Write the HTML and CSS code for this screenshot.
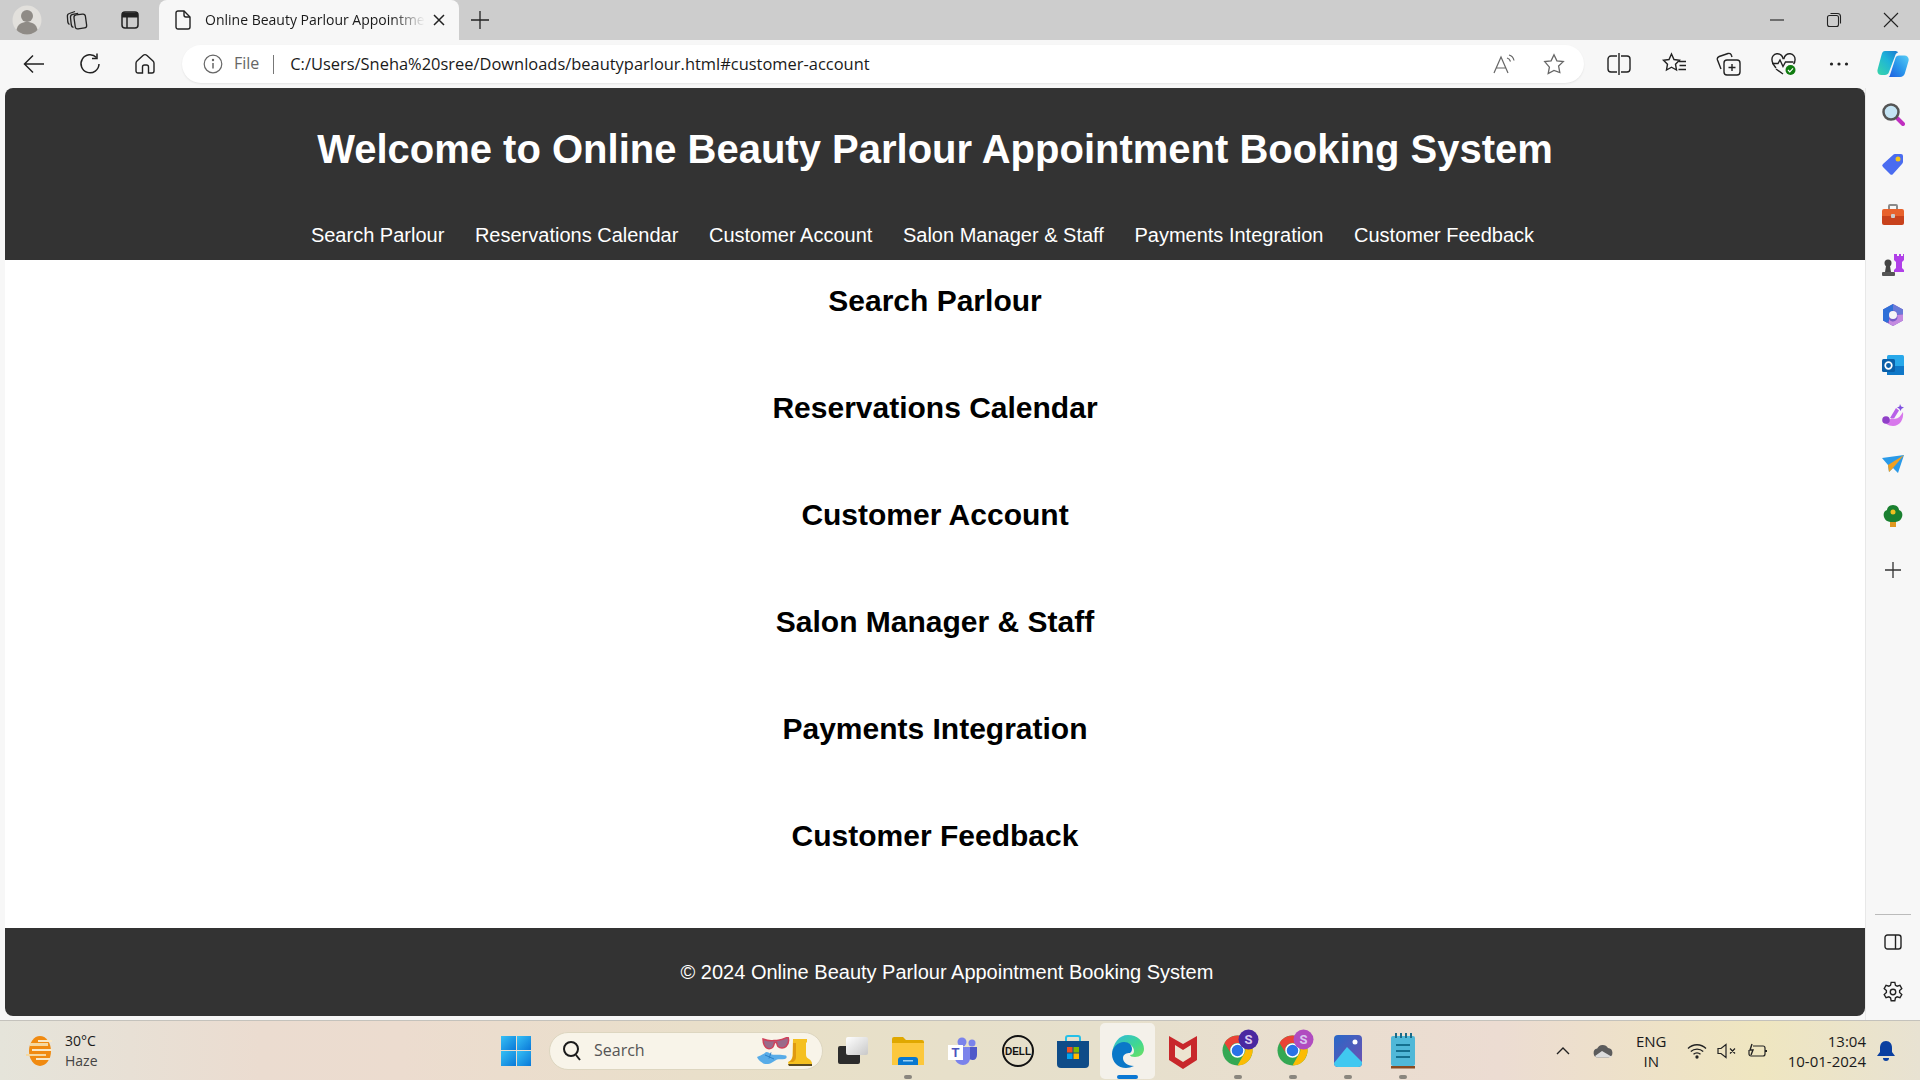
FILE: index.html
```html
<!DOCTYPE html>
<html lang="en">

<head>
    <meta charset="UTF-8">
    <title>Online Beauty Parlour Appointment Booking System</title>
    <link rel="stylesheet" href="styles.css">
</head>

<body>
    <!-- browser tab strip -->
    <div class="tabstrip">
        <div class="strip-btn profile">
            <svg width="30" height="30" viewBox="0 0 30 30"><circle cx="15" cy="15" r="14.500" fill="#e2e0dc"/><circle cx="15" cy="11" r="6" fill="#8f8b86"/><path d="M4.500 25c1-6 5.500-8 10.500-8s9.500 2 10.500 8a14.500 14.500 0 0 1-21 0z" fill="#8f8b86"/></svg>
        </div>
        <div class="strip-btn collections">
            <svg width="22" height="22" viewBox="0 0 22 22" fill="none" stroke="#222" stroke-width="1.300"><rect x="8.500" y="5.500" width="11.500" height="14" rx="2.500" transform="rotate(-8 14 12)"/><path d="M7.500 18.500C6 18 5.500 17 5.300 16L4.500 8.500c-.2-1.700.6-2.800 2.200-3.200l5.500-1"/><path d="M3.500 15.500C2.500 15 2 14 1.800 13L1.400 7.500c-.2-1.500.6-2.600 2-3L9 2.500"/></svg>
        </div>
        <div class="strip-btn vtabs">
            <svg width="20" height="20" viewBox="0 0 20 20" fill="none" stroke="#222" stroke-width="1.500"><rect x="2" y="2" width="16" height="16" rx="3"/><path d="M2 5h16" stroke-width="5"/><path d="M7 6v12"/></svg>
        </div>
        <div class="tab">
            <svg width="16" height="20" viewBox="0 0 16 20" fill="none" stroke="#222" stroke-width="1.400"><path d="M3 1h6l6 6v10a2 2 0 0 1-2 2H3a2 2 0 0 1-2-2V3a2 2 0 0 1 2-2z"/><path d="M9 1v4a2 2 0 0 0 2 2h4"/></svg>
            <span class="tab-title">Online Beauty Parlour Appointme</span>
            <svg class="tab-close" width="12" height="12" viewBox="0 0 12 12" stroke="#222" stroke-width="1.500"><path d="M1 1l10 10M11 1 1 11"/></svg>
        </div>
        <div class="new-tab">
            <svg width="18" height="18" viewBox="0 0 18 18" stroke="#222" stroke-width="1.300"><path d="M9 0v18M0 9h18"/></svg>
        </div>
        <div class="win-controls">
            <svg width="16" height="16" viewBox="0 0 16 16" stroke="#222" stroke-width="1.100"><path d="M1 8h14"/></svg>
            <svg width="16" height="16" viewBox="0 0 16 16" fill="none" stroke="#222" stroke-width="1.100"><rect x="1.500" y="3.500" width="11" height="11" rx="2"/><path d="M4.500 1.500h7a3 3 0 0 1 3 3v7"/></svg>
            <svg width="16" height="16" viewBox="0 0 16 16" stroke="#222" stroke-width="1.100"><path d="M1 1l14 14M15 1 1 15"/></svg>
        </div>
    </div>

    <!-- address bar row -->
    <div class="toolbar">
        <div class="tool-btn back">
            <svg width="22" height="20" viewBox="0 0 22 20" fill="none" stroke="#222" stroke-width="1.500"><path d="M21 10H2M10 1.500 1.500 10l8.500 8.500"/></svg>
        </div>
        <div class="tool-btn">
            <svg width="22" height="22" viewBox="0 0 22 22" fill="none" stroke="#222" stroke-width="1.500"><path d="M17.500 4.500A9 9 0 1 0 20 11"/><path d="M18 .5v5h-5"/></svg>
        </div>
        <div class="tool-btn home">
            <svg width="20" height="22" viewBox="0 0 20 22" fill="none" stroke="#222" stroke-width="1.400"><path d="M8 2.500a3 3 0 0 1 4 0l6 5.500a3 3 0 0 1 1 2.200V18a2 2 0 0 1-2 2h-3.500v-6a2 2 0 0 0-2-2H9.500a2 2 0 0 0-2 2v6H3a2 2 0 0 1-2-2v-7.800A3 3 0 0 1 2 8z"/></svg>
        </div>
        <div class="address">
            <svg class="addr-info" width="20" height="20" viewBox="0 0 20 20" fill="none" stroke="#666" stroke-width="1.200"><circle cx="10" cy="10" r="8.800"/><path d="M10 9v5.500" stroke-width="1.500"/><circle cx="10" cy="6" r=".6" fill="#666"/></svg>
            <span class="addr-file">File</span>
            <span class="addr-sep"></span>
            <span class="addr-url">C:/Users/Sneha%20sree/Downloads/beautyparlour.html#customer-account</span>
            <svg class="addr-read" width="22" height="20" viewBox="0 0 22 20" fill="none" stroke="#666" stroke-width="1.200"><path d="M1 19 8 3l7 16M3.500 14h9"/><path d="M14 4c1.800.5 3 2 3.500 3.500M16 1c2.500.7 4.500 3 5 5.500"/></svg>
            <svg class="addr-star" width="22" height="22" viewBox="0 0 22 22" fill="none" stroke="#666" stroke-width="1.300"><path d="M11 1.800l2.900 6 6.400.8-4.700 4.500 1.200 6.500L11 17.400l-5.800 3.200 1.200-6.500L1.700 8.600l6.400-.8z"/></svg>
        </div>
        <div class="tool-btn edge-btn">
            <svg width="24" height="22" viewBox="0 0 24 22" fill="none" stroke="#222" stroke-width="1.400"><path d="M10 3H4a3 3 0 0 0-3 3v10a3 3 0 0 0 3 3h6M14 3h6a3 3 0 0 1 3 3v10a3 3 0 0 1-3 3h-6"/><path d="M12 0v22"/></svg>
        </div>
        <div class="tool-btn edge-btn">
            <svg width="26" height="24" viewBox="0 0 26 24" fill="none" stroke="#222" stroke-width="1.400"><path d="M10.500 2l2.500 5.500 5.500.7-4 4 1 5.800-5-2.800-5 2.800 1-5.800-4-4 5.500-.7z"/><path d="M18 9.500h7M18.500 13.500H25M17.500 17.500H25"/></svg>
        </div>
        <div class="tool-btn edge-btn">
            <svg width="26" height="24" viewBox="0 0 26 24" fill="none" stroke="#222" stroke-width="1.400"><rect x="8" y="8" width="16" height="15" rx="3"/><path d="M16 12v7M12.500 15.500h7"/><path d="M5 17 1.500 8c-.5-1.500.3-3 1.700-3.500L12 1.500c1.500-.5 3 .3 3.500 2L16 5"/></svg>
        </div>
        <div class="tool-btn edge-btn">
            <svg width="26" height="24" viewBox="0 0 26 24" fill="none"><path d="M5 16C2.500 13 1 11 1 8a5.500 5.500 0 0 1 11-1.500h1A5.500 5.500 0 0 1 24 8c0 1.500-.5 3-1.500 4M5 17l7 5" stroke="#222" stroke-width="1.400"/><path d="M1 11.500h6l2-3.500 3 6.500 2.500-4.500h8" stroke="#222" stroke-width="1.400"/><circle cx="19.500" cy="18" r="5" fill="#107c10"/><path d="M17 18l1.800 1.800 3.200-3.400" stroke="#fff" stroke-width="1.200"/></svg>
        </div>
        <div class="tool-btn edge-btn">
            <svg width="20" height="4" viewBox="0 0 20 4" fill="#222"><circle cx="2.500" cy="2" r="1.600"/><circle cx="10" cy="2" r="1.600"/><circle cx="17.500" cy="2" r="1.600"/></svg>
        </div>
        <div class="tool-btn copilot">
            <svg width="32" height="28" viewBox="0 0 32 28">
                <defs>
                    <linearGradient id="cpa" x1="0" y1="1" x2="1" y2="0"><stop offset="0" stop-color="#3ad6a8"/><stop offset=".55" stop-color="#1eb4d8"/><stop offset="1" stop-color="#1a78d0"/></linearGradient>
                    <linearGradient id="cpb" x1="0" y1="1" x2="1" y2="0"><stop offset="0" stop-color="#1f5ee0"/><stop offset=".5" stop-color="#2a98ec"/><stop offset="1" stop-color="#58cdf5"/></linearGradient>
                </defs>
                <path d="M14 27h9c2.500 0 4-1.200 4.800-3.500L31.500 11c.8-3-1-5.500-4-5.500H22c-2 0-3 1-3.600 2.800L13 25c-.3 1-.6 1.700-1.500 2z" fill="url(#cpb)"/>
                <path d="M8 1h10c1.500 0 2.500.5 3.200 1.500-1.500.2-2.400 1.200-3 3L12 22c-.7 2.200-2.300 3-4 3H4.500C1.500 25-.2 22.500.6 19.500L4.500 5C5.200 2.500 6 1 8 1z" fill="url(#cpa)"/>
            </svg>
        </div>
    </div>

    <div class="middle">
        <div class="page">
            <header class="site-header">
                <h1>Welcome to Online Beauty Parlour Appointment Booking System</h1>
                <nav class="site-nav">
                    <a href="#search-parlour">Search Parlour</a>
                    <a href="#reservations-calendar">Reservations Calendar</a>
                    <a href="#customer-account">Customer Account</a>
                    <a href="#salon-manager">Salon Manager &amp; Staff</a>
                    <a href="#payments-integration">Payments Integration</a>
                    <a href="#customer-feedback">Customer Feedback</a>
                </nav>
            </header>

            <main class="sections">
                <section id="search-parlour"><h2>Search Parlour</h2></section>
                <section id="reservations-calendar"><h2>Reservations Calendar</h2></section>
                <section id="customer-account"><h2>Customer Account</h2></section>
                <section id="salon-manager"><h2>Salon Manager &amp; Staff</h2></section>
                <section id="payments-integration"><h2>Payments Integration</h2></section>
                <section id="customer-feedback"><h2>Customer Feedback</h2></section>
            </main>

            <footer class="site-footer">&copy; 2024 Online Beauty Parlour Appointment Booking System</footer>
        </div>

        <!-- edge sidebar -->
        <aside class="sidebar">
            <svg width="24" height="24" viewBox="0 0 24 24"><path d="M15 15l7 7" stroke="#c02fc0" stroke-width="4" stroke-linecap="round"/><circle cx="10" cy="10" r="7.500" fill="#c4e4f4" stroke="#555" stroke-width="2.500"/></svg>
            <svg width="24" height="24" viewBox="0 0 24 24"><path d="M14 2h6a2 2 0 0 1 2 2v6a3 3 0 0 1-1 2l-9 10a2 2 0 0 1-3 0l-7-7a2 2 0 0 1 0-3L12 3a3 3 0 0 1 2-1z" fill="#4a6cf0"/><circle cx="17" cy="7" r="2.500" fill="#f5c518"/></svg>
            <svg width="24" height="24" viewBox="0 0 24 24"><path d="M8 8V4a1 1 0 0 1 1-1h6a1 1 0 0 1 1 1v4" fill="none" stroke="#8a8a8a" stroke-width="2"/><path d="M1 9a2 2 0 0 1 2-2h18a2 2 0 0 1 2 2v5H1z" fill="#e8622c"/><path d="M1 14h22v7a2 2 0 0 1-2 2H3a2 2 0 0 1-2-2z" fill="#c8421c"/><rect x="10" y="12" width="4" height="4" rx="1" fill="#ccc"/></svg>
            <svg width="24" height="24" viewBox="0 0 24 24"><path d="M14 1h2v2h2V1h2v2h2V1h1v6l-2 2v6l2 2v2H13v-2l2-2V9l-2-2V1z" fill="#b03fe8"/><circle cx="7" cy="10" r="3.500" fill="#444"/><path d="M5 13h4l1 6H4z" fill="#444"/><rect x="1" y="19" width="13" height="4" rx="1" fill="#555"/></svg>
            <svg width="24" height="24" viewBox="0 0 24 24">
                <path d="M12 1l10 5.500v11L12 23 2 17.500v-11z" fill="#7a5cc8"/>
                <path d="M2 6.500 12 1v7a4 4 0 0 0-4 4v5.500l-2 2.200-4-2.200z" fill="#2f70d8"/>
                <path d="M12 1l10 5.500v5H16a4 4 0 0 0-4-4z" fill="#6a7ad8"/>
                <path d="M22 11.500v6L12 23l-4-2.200V16a4 4 0 0 0 8-4z" fill="#c48ae0"/>
                <circle cx="12" cy="12" r="4" fill="#f7f7f7"/>
            </svg>
            <svg width="24" height="24" viewBox="0 0 24 24"><rect x="6" y="2" width="17" height="20" rx="1.500" fill="#28a8ea"/><path d="M6 13h17v9H6z" fill="#0f78c8"/><rect x="1" y="6" width="13" height="13" rx="1.500" fill="#0a5fa8"/><circle cx="7.500" cy="12.500" r="3.300" fill="none" stroke="#fff" stroke-width="1.700"/></svg>
            <svg width="24" height="24" viewBox="0 0 24 24"><path d="M9 15 15 5l3 2.500-5 8z" fill="#b860e8"/><path d="M2 15c3 3 7 2 9 0l1 1c3 0 6-1 8-4l2-3c1 7-3 14-10 14-5 0-9-3-10-8z" fill="#d878ec"/><circle cx="5" cy="17" r="3.800" fill="#9040c8"/><path d="M19 1l1.200 2.400L23 4.500l-2.400 1.200L19.500 8l-1.200-2.300L16 4.500l2.400-1.100z" fill="#8050e0"/></svg>
            <svg width="24" height="24" viewBox="0 0 24 24"><path d="M1 5l22-3-6 18-5-5-4 4-1-7z" fill="#2a9ae8"/><path d="M7 12l16-10-11 13-4 4z" fill="#f0a020"/></svg>
            <svg width="24" height="24" viewBox="0 0 24 24"><rect x="9" y="17" width="6" height="6" fill="#e09820"/><path d="M12 1c4 0 6 3 6 5 3 1 4 4 3 7-1 3-3 5-9 5s-8-2-9-5c-1-3 0-6 3-7 0-2 2-5 6-5z" fill="#1a8030"/><circle cx="12" cy="8" r="2.500" fill="#f0c020"/></svg>
            <svg class="side-plus" width="16" height="16" viewBox="0 0 16 16" stroke="#333" stroke-width="1.300"><path d="M8 0v16M0 8h16"/></svg>
            <span class="side-spacer"></span>
            <span class="side-line"></span>
            <svg class="side-panel" width="18" height="16" viewBox="0 0 18 16" fill="none" stroke="#222" stroke-width="1.400"><rect x="1" y="1" width="16" height="14" rx="2.500"/><path d="M11.500 1v14"/></svg>
            <svg class="side-gear" width="22" height="22" viewBox="0 0 24 24" fill="none" stroke="#222" stroke-width="1.500"><circle cx="12" cy="12" r="3"/><path d="M10 1.500h4l.7 3.200 1.800 1 3.100-1 2 3.500-2.400 2.200v2.200l2.400 2.200-2 3.500-3.100-1-1.800 1-.7 3.200h-4l-.7-3.200-1.800-1-3.100 1-2-3.500 2.400-2.200v-2.200L2.400 8.200l2-3.500 3.100 1 1.800-1z"/></svg>
        </aside>
    </div>

    <!-- windows taskbar -->
    <div class="taskbar">
        <div class="weather">
            <svg width="30" height="32" viewBox="0 0 30 32"><ellipse cx="16" cy="16" rx="11" ry="15" fill="#f08a10"/><path d="M6 8h18v3H6zM2 19h20v2H2z" fill="#f5d8a0"/><path d="M14 5h14v2H14zM8 14h20v2H8zM12 23h14v2H12z" fill="#f8e8c8"/></svg>
            <div class="weather-text">
                <span>30°C</span>
                <span class="haze">Haze</span>
            </div>
        </div>
        <div class="task-center">
            <div class="win-logo"><i></i><i></i><i></i><i></i></div>
            <div class="task-search">
                <svg width="20" height="22" viewBox="0 0 20 22" fill="none" stroke="#1a1a1a" stroke-width="2"><circle cx="9" cy="9" r="7"/><path d="M14 15l4 5"/></svg>
                <span>Search</span>
                <svg class="search-art" width="56" height="30" viewBox="0 0 56 30">
                    <path d="M6 2c5 2 9 2 11 1.500h3C23 3 27 2 31 0c1 3 .5 7-2 9.500-2 2-6 2-8 0-1-1-1-3-1.500-4h-2c-.5 2-.5 3.500-2 5-2 1.500-5 1.500-6.500 0C7 8.500 6 5 6 2z" fill="#9a6a8a" stroke="#d0405a" stroke-width="1.500"/>
                    <path d="M0 20c3-1 7-3 9-5 3 0 4 2 6 2.500 3 .5 9-.5 14 1 1 1 1 3-1 3.500-3 .5-6 0-8 .5l-5 3c-3 2-8 2-10 0-2-1-4-3-5-5.500z" fill="#58ace8"/>
                    <path d="M8 18l9 4M14 15.500l-2 6" stroke="#2a80c8" stroke-width="1" fill="none"/>
                    <path d="M36 2h14v3l-1 1v11c0 2 .5 4 3 5 2 1 3 3 3 5v2H32l-1-4c3-1 4-3 4.500-6z" fill="#f5c020"/>
                    <path d="M36 6h3v14c0 2-1 4-3 5h-4c2-1 3.500-3 4-6z" fill="#e09a10"/>
                    <path d="M31 27h24v2H32z" fill="#5a4a20"/>
                </svg>
            </div>
            <div class="task-app">
                <svg width="30" height="28" viewBox="0 0 30 28">
                    <defs><linearGradient id="tvw" x1="0" y1="0" x2="1" y2="1"><stop offset="0" stop-color="#fff"/><stop offset="1" stop-color="#c8c8c8"/></linearGradient></defs>
                    <rect x="0" y="9" width="22" height="18" rx="2" fill="#2c2c2c"/><rect x="8" y="0" width="22" height="18" rx="2" fill="url(#tvw)"/>
                </svg>
            </div>
            <div class="task-app running">
                <svg width="34" height="30" viewBox="0 0 34 30"><path d="M1 3a2 2 0 0 1 2-2h9l3 3h16a2 2 0 0 1 2 2v4H1z" fill="#e0a800"/><path d="M1 7h32v22H1z" fill="#fcc83c"/><path d="M7 29v-5a3 3 0 0 1 3-3h14a3 3 0 0 1 3 3v5z" fill="#0878d0"/><rect x="12" y="24" width="10" height="1.500" fill="#9cd0f0"/></svg>
            </div>
            <div class="task-app">
                <svg width="30" height="30" viewBox="0 0 30 30"><circle cx="24" cy="7" r="3.500" fill="#7b83eb"/><circle cx="14" cy="6" r="4.500" fill="#7b83eb"/><path d="M19 11h10v8c0 3-2 5-4 5s-6-1-6-5z" fill="#5059c9"/><path d="M7 11h15v11c0 4-3 7-7 7s-8-3-8-7z" fill="#7b83eb"/><rect x="0" y="9" width="15" height="15" fill="#fff"/><text class="teams-t" x="7.500" y="21">T</text></svg>
            </div>
            <div class="task-app">
                <svg width="34" height="34" viewBox="0 0 34 34"><circle cx="17" cy="17" r="15" fill="none" stroke="#111" stroke-width="2"/><text class="dell-t" x="17" y="20.500">DELL</text></svg>
            </div>
            <div class="task-app">
                <svg width="32" height="34" viewBox="0 0 32 34"><path d="M9 7V4a2 2 0 0 1 2-2h10a2 2 0 0 1 2 2v3" fill="none" stroke="#26c0e8" stroke-width="2"/><path d="M0 7h32v23a4 4 0 0 1-4 4H4a4 4 0 0 1-4-4z" fill="#0f4c88"/><rect x="10" y="13" width="5.500" height="5.500" fill="#f25022"/><rect x="16.500" y="13" width="5.500" height="5.500" fill="#7fba00"/><rect x="10" y="19.500" width="5.500" height="5.500" fill="#00a4ef"/><rect x="16.500" y="19.500" width="5.500" height="5.500" fill="#ffb900"/></svg>
            </div>
            <div class="task-app active">
                <svg width="34" height="34" viewBox="0 0 34 34">
                    <defs><linearGradient id="edg" x1="0" y1="0" x2="1" y2="1"><stop offset="0" stop-color="#2fb8e0"/><stop offset=".6" stop-color="#40d890"/><stop offset="1" stop-color="#70e060"/></linearGradient></defs>
                    <path d="M17 1c9 0 16 6 16 14 0 5-4 8-9 8-3 0-5-1-5-2 2 0 4-1 4-4 0-4-4-8-9-8-7 0-13 5-13 11C2 9 8 1 17 1z" fill="url(#edg)"/>
                    <path d="M1 20c0-7 6-12 12-12 5 0 8 3 8 7 0 2-1 3-2 4-3 0-7 1-7 5 0 4 4 8 11 8-3 1-5 2-8 2-8 0-14-6-14-14z" fill="#0a78c8"/>
                </svg>
            </div>
            <div class="task-app">
                <svg width="28" height="36" viewBox="0 0 28 36"><path d="M0 3l14 8 14-8v24l-14 9-14-9z" fill="#c8272b"/><path d="M6 12l8 5 8-5v12l-8 5-8-5z" fill="#ece4d0"/></svg>
            </div>
            <div class="task-app running">
                <svg width="55" height="56" viewBox="0 0 55 56">
                    <circle cx="27.500" cy="27.500" r="15" fill="#34a853"/>
                    <path d="M14.500 20A15 15 0 0 1 40.500 20H27.500A7 7 0 0 0 21.400 31z" fill="#ea4335"/>
                    <path d="M40.500 20A15 15 0 0 1 27.500 42.500L34 31A7 7 0 0 0 27.500 20z" fill="#fbbc05"/>
                    <circle cx="27.500" cy="27.500" r="6.500" fill="#2a72e8" stroke="#fff" stroke-width="1.500"/>
                    <circle cx="38.500" cy="16.500" r="10" fill="#4a28a0"/><text class="badge-s" x="38.500" y="21">S</text>
                </svg>
            </div>
            <div class="task-app running">
                <svg width="55" height="56" viewBox="0 0 55 56">
                    <circle cx="27.500" cy="27.500" r="15" fill="#34a853"/>
                    <path d="M14.500 20A15 15 0 0 1 40.500 20H27.500A7 7 0 0 0 21.400 31z" fill="#ea4335"/>
                    <path d="M40.500 20A15 15 0 0 1 27.500 42.500L34 31A7 7 0 0 0 27.500 20z" fill="#fbbc05"/>
                    <circle cx="27.500" cy="27.500" r="6.500" fill="#2a72e8" stroke="#fff" stroke-width="1.500"/>
                    <circle cx="38.500" cy="16.500" r="10" fill="#b04cc0"/><text class="badge-s" x="38.500" y="21">S</text>
                </svg>
            </div>
            <div class="task-app running">
                <svg width="28" height="32" viewBox="0 0 28 32">
                    <defs><linearGradient id="pho" x1="0" y1="0" x2="1" y2="1"><stop offset="0" stop-color="#2868c8"/><stop offset="1" stop-color="#7050b0"/></linearGradient></defs>
                    <rect width="28" height="32" rx="4" fill="url(#pho)"/><circle cx="21" cy="7" r="2.500" fill="#fff"/><path d="M0 28l13-16 15 15v1a4 4 0 0 1-4 4H4a4 4 0 0 1-4-4z" fill="#40c8f0"/>
                </svg>
            </div>
            <div class="task-app running">
                <svg width="24" height="36" viewBox="0 0 24 36"><rect x="0" y="3" width="24" height="30" rx="2" fill="#50b8d8"/><rect y="33" width="24" height="2.500" fill="#8a4a20"/><path d="M5 0v5M10 0v5M15 0v5M20 0v5" stroke="#1a6a88" stroke-width="2"/><path d="M5 12h14M5 18h14M5 24h14" stroke="#14708f" stroke-width="2"/></svg>
            </div>
        </div>
        <div class="tray">
            <svg class="tray-chev" width="14" height="9" viewBox="0 0 14 9" fill="none" stroke="#222" stroke-width="1.400"><path d="M1 8l6-6 6 6"/></svg>
            <svg class="tray-cloud" width="20" height="15" viewBox="0 0 20 15"><path d="M5 14.500a4.500 4.500 0 0 1-.8-8.900A6 6 0 0 1 15 5a4.800 4.800 0 0 1 .5 9.500z" fill="#5c5c5c"/><path d="M2 13l7-5 8.500 5 2 .3c-1 .8-2.500 1.200-4 1.200H5C3.800 14.500 2.800 14 2 13z" fill="#dcdcdc"/></svg>
            <div class="tray-lang"><span>ENG</span><span>IN</span></div>
            <svg class="tray-wifi" width="20" height="16" viewBox="0 0 20 16" fill="none" stroke="#222" stroke-width="1.300"><path d="M1 5.500c5-5 13-5 18 0M3.800 8.500c3.500-3.300 9-3.300 12.400 0M6.500 11.300c2-1.800 5-1.800 7 0"/><circle cx="10" cy="14" r="1" fill="#222"/></svg>
            <svg class="tray-sound" width="20" height="16" viewBox="0 0 20 16" fill="none" stroke="#222" stroke-width="1.200"><path d="M1 5.500h3L9 1.500v13l-5-4H1zM13 5.500l5 5M18 5.500l-5 5"/></svg>
            <svg class="tray-batt" width="20" height="16" viewBox="0 0 20 16" fill="none" stroke="#222" stroke-width="1.200"><path d="M5 3h10a2 2 0 0 1 2 2v6a2 2 0 0 1-2 2H3a2 2 0 0 1-2-2V7"/><path d="M18 7v2" stroke-width="2"/><path d="M4 1 2 7h3l-2 5" stroke-width="1.400"/></svg>
            <div class="tray-clock"><span>13:04</span><span>10-01-2024</span></div>
            <svg class="tray-bell" width="18" height="20" viewBox="0 0 18 20" fill="#0a3fa0"><path d="M9 0c4 0 6 3 6 7v4l3 4H0l3-4V7c0-4 2-7 6-7z"/><path d="M6 17h6a3 3 0 0 1-6 0z"/></svg>
        </div>
    </div>
</body>

</html>
```

FILE: styles.css
```css
* {
    box-sizing: border-box;
}

body {
    margin: 0;
    width: 1920px;
    height: 1080px;
    overflow: hidden;
    display: flex;
    flex-direction: column;
    background-color: #f7f7f7;
    font-family: "Open Sans", "Noto Sans", sans-serif;
    color: #1a1a1a;
}

/* tab strip */
.tabstrip {
    height: 40px;
    background-color: #cdcdcd;
    display: flex;
    align-items: center;
}

.strip-btn {
    width: 44px;
    display: flex;
    justify-content: center;
}

.profile {
    margin-left: 5px;
}

.collections {
    margin-left: 6px;
}

.vtabs {
    margin-left: 9px;
}

.tab {
    width: 300px;
    height: 40px;
    margin-left: 7px;
    padding: 0 14px 0 16px;
    background-color: #f7f7f7;
    border-radius: 8px 8px 0 0;
    display: flex;
    align-items: center;
}

.tab-title {
    margin-left: 14px;
    margin-top: -2px;
    font-size: 14px;
    white-space: nowrap;
    -webkit-mask-image: linear-gradient(to right, #000 85%, transparent 100%);
    mask-image: linear-gradient(to right, #000 85%, transparent 100%);
}

.tab-close {
    margin-left: auto;
}

.new-tab {
    margin-left: 12px;
    display: flex;
}

.win-controls {
    margin-left: auto;
    margin-right: 21px;
    display: flex;
    gap: 41px;
}

/* toolbar */
.toolbar {
    height: 48px;
    background-color: #f7f7f7;
    display: flex;
    align-items: center;
}

.tool-btn {
    width: 44px;
    display: flex;
    justify-content: center;
    align-items: center;
    margin-left: 12px;
}

.back {
    margin-left: 12px;
}

.home {
    margin-left: 11px;
}

.address {
    width: 1403px;
    height: 38px;
    margin-left: 15px;
    margin-right: 7px;
    border-radius: 19px;
    background-color: #fff;
    box-shadow: 0 1px 2px rgba(0, 0, 0, 0.08);
    display: flex;
    align-items: center;
    padding-left: 21px;
}

.addr-file {
    margin-left: 11px;
    margin-top: -2px;
    font-size: 16px;
    color: #666;
}

.addr-sep {
    width: 1px;
    height: 19px;
    margin-left: 14px;
    background-color: #777;
}

.addr-url {
    margin-left: 16px;
    margin-top: -2px;
    font-size: 16.450px;
    color: #1a1a1a;
}

.addr-read {
    margin-left: auto;
}

.addr-star {
    margin-left: 28px;
    margin-right: 19px;
}

.edge-btn {
    width: 55px;
    margin-left: 0;
}

.copilot {
    width: 54px;
    margin-left: 0;
}

/* page */
.middle {
    height: 932px;
    display: flex;
}

.page {
    width: 1860px;
    height: 928px;
    margin-left: 5px;
    display: flex;
    flex-direction: column;
    background-color: #fff;
    border-radius: 8px;
    overflow: hidden;
    font-family: "Liberation Sans", Arial, sans-serif;
    color: #000;
}

.site-header {
    height: 172px;
    background-color: #333;
    color: #fff;
    text-align: center;
    padding-top: 38px;
}

.site-header h1 {
    margin: 0;
    font-size: 40px;
    line-height: 46px;
}

.site-nav {
    margin-top: 52px;
    padding-right: 25px;
    display: flex;
    justify-content: center;
    gap: 30.600px;
}

.site-nav a {
    color: #fff;
    text-decoration: none;
    font-size: 20px;
    line-height: 23px;
}

.sections {
    flex: 1;
    padding-top: 24.400px;
    text-align: center;
}

.sections section {
    height: 106.900px;
}

.sections h2 {
    margin: 0;
    font-size: 30px;
    line-height: 34px;
}

.site-footer {
    height: 88px;
    padding-left: 24px;
    background-color: #333;
    color: #fff;
    font-size: 20px;
    display: flex;
    align-items: center;
    justify-content: center;
}

/* sidebar */
.sidebar {
    width: 55px;
    height: 932px;
    display: flex;
    flex-direction: column;
    align-items: center;
    gap: 26.200px;
    padding-top: 14px;
    box-shadow: inset 1px 0 0 #e8e8e8;
}

.side-plus {
    margin-top: 8px;
}

.side-spacer {
    flex: 1;
}

.side-line {
    width: 36px;
    height: 1px;
    background-color: #bbb;
}

.side-panel {
    margin-top: -7px;
}

.side-gear {
    margin-top: 5px;
    margin-bottom: 17px;
}

/* taskbar */
.taskbar {
    height: 60px;
    border-top: 1px solid #c4c2bc;
    background: linear-gradient(to right, #e5e4da 0, #ebdcd0 260px, #ecdccf 400px, #e8e0c8 800px, #e6e0cc 1100px, #ecdcd2 1500px, #efe6c0 1760px, #e8e2d2 1920px);
    display: flex;
    align-items: center;
    color: #1a1a1a;
}

.weather {
    display: flex;
    align-items: center;
    margin-left: 24px;
    width: 477px;
}

.weather-text {
    margin-left: 11px;
    display: flex;
    flex-direction: column;
    font-size: 14px;
    line-height: 20px;
}

.haze {
    color: #444;
}

.task-center {
    display: flex;
    align-items: center;
}

.win-logo {
    width: 30px;
    height: 30px;
    display: grid;
    grid-template-columns: 1fr 1fr;
    gap: 1px;
}

.win-logo i {
    background: linear-gradient(135deg, #36c0f5, #0a78d8);
}

.task-search {
    width: 274px;
    height: 38px;
    margin-left: 18px;
    margin-right: 2px;
    padding-left: 12px;
    border-radius: 19px;
    background-color: #f8f4e9;
    border: 1px solid #ddd6c0;
    display: flex;
    align-items: center;
    font-size: 16px;
    color: #555;
    position: relative;
}

.task-search span {
    margin-left: 12px;
    margin-top: -1px;
}

.search-art {
    position: absolute;
    right: 9px;
    top: 4px;
}

.task-app {
    width: 55px;
    height: 56px;
    display: flex;
    justify-content: center;
    align-items: center;
    position: relative;
}

.task-app.running::after,
.task-app.active::after {
    content: "";
    position: absolute;
    bottom: 0;
    left: 24px;
    width: 8px;
    height: 4px;
    border-radius: 2px;
    background-color: #8a867e;
}

.task-app.active {
    background-color: #f4f1ea;
    border-radius: 5px;
}

.task-app.active::after {
    left: 17px;
    width: 21px;
    background-color: #0a78d4;
}

.teams-t {
    font: bold 13px "Liberation Sans", sans-serif;
    fill: #4b53bc;
    text-anchor: middle;
}

.dell-t {
    font: bold 10px "Liberation Sans", sans-serif;
    fill: #111;
    text-anchor: middle;
}

.badge-s {
    font: bold 13px "Roboto", sans-serif;
    fill: #d8c8f0;
    text-anchor: middle;
}

.tray {
    margin-left: auto;
    margin-right: 25px;
    display: flex;
    align-items: center;
}

.tray-cloud {
    margin-left: 23px;
}

.tray-lang {
    width: 40px;
    margin-left: 18px;
    display: flex;
    flex-direction: column;
    align-items: center;
    font-size: 15px;
    line-height: 20px;
}

.tray-wifi {
    margin-left: 16px;
}

.tray-sound {
    margin-left: 10px;
}

.tray-batt {
    margin-left: 11px;
}

.tray-clock {
    margin-left: 19.500px;
    display: flex;
    flex-direction: column;
    align-items: flex-end;
    font-size: 15px;
    line-height: 20px;
}

.tray-bell {
    margin-left: 11px;
}
```
